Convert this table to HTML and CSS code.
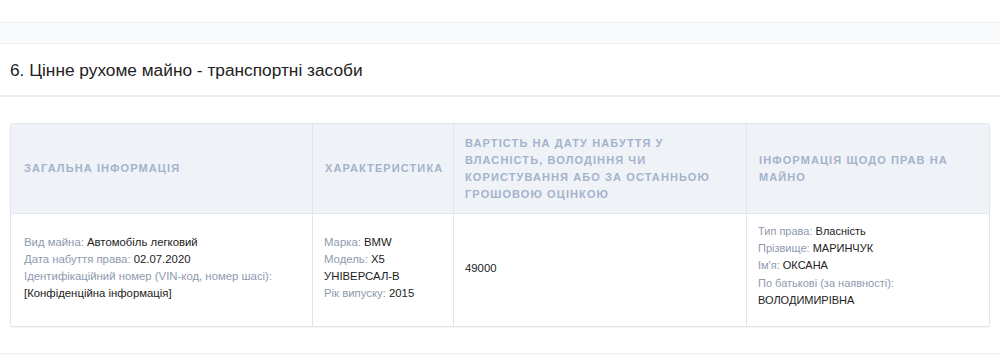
FILE: index.html
```html
<!DOCTYPE html>
<html lang="uk">
<head>
<meta charset="utf-8">
<link rel="stylesheet" href="styles.css">
</head>
<body>
<div class="top-space"></div>
<div class="band"></div>
<div class="section">
  <h2 class="section-title">6. Цінне рухоме майно - транспортні засоби</h2>
</div>
<div class="content">
  <table class="data">
    <colgroup>
      <col class="c1"><col class="c2"><col class="c3"><col class="c4">
    </colgroup>
    <thead>
      <tr>
        <th>Загальна інформація</th>
        <th>Характеристика</th>
        <th>Вартість на дату набуття у власність, володіння чи користування або за останньою грошовою оцінкою</th>
        <th>Інформація щодо прав на майно</th>
      </tr>
    </thead>
    <tbody>
      <tr>
        <td>
          <div><span class="lbl">Вид майна:</span> Автомобіль легковий</div>
          <div><span class="lbl">Дата набуття права:</span> 02.07.2020</div>
          <div><span class="lbl">Ідентифікаційний номер (VIN-код, номер шасі):</span> <span>[Конфіденційна інформація]</span></div>
        </td>
        <td>
          <div><span class="lbl">Марка:</span> BMW</div>
          <div><span class="lbl">Модель:</span> <span>X5</span> <span>УНІВЕРСАЛ-В</span></div>
          <div><span class="lbl">Рік випуску:</span> 2015</div>
        </td>
        <td>49000</td>
        <td class="small">
          <div><span class="lbl">Тип права:</span> Власність</div>
          <div><span class="lbl">Прізвище:</span> МАРИНЧУК</div>
          <div><span class="lbl">Ім'я:</span> ОКСАНА</div>
          <div><span class="lbl">По батькові (за наявності):</span> <span>ВОЛОДИМИРІВНА</span></div>
        </td>
      </tr>
    </tbody>
  </table>
</div>
<div class="bottom-band"></div>
</body>
</html>
```
FILE: styles.css
```css
html, body {
  margin: 0;
  padding: 0;
  background: #fff;
  font-family: "Liberation Sans", Arial, sans-serif;
  color: #222;
}
.top-space {
  height: 22px;
  background: #fff;
}
.band {
  height: 20px;
  background: #f8f9fb;
  border-top: 1px solid #eef0f4;
  border-bottom: 1px solid #eef0f4;
}
.section {
  height: 51px;
  display: flex;
  align-items: center;
  padding: 0 10px;
  border-bottom: 2px solid #eceef2;
}
.section-title {
  margin: 0;
  font-size: 17.3px;
  font-weight: normal;
  color: #222;
  padding-top: 1px;
}
.content {
  padding: 26px 10px 26px 10px;
}
.data {
  width: 100%;
  border-collapse: separate;
  border-spacing: 0;
  border: 1px solid #e1e6ed;
  border-radius: 3px;
  box-shadow: 0 1px 2px rgba(0,0,0,0.06);
  table-layout: fixed;
  overflow: hidden;
}
.c1 { width: 302px; }
.c2 { width: 141px; }
.c3 { width: 293px; }
.c4 { width: auto; }
.data th {
  background: #eff3f8;
  color: #a4b2cb;
  font-size: 11px;
  font-weight: bold;
  text-transform: uppercase;
  letter-spacing: 1.1px;
  text-align: left;
  line-height: 17px;
  height: 90px;
  padding: 0 11px 0 12px;
  box-sizing: border-box;
  border-right: 1px solid #e2e6ec;
  border-bottom: 1px solid #e2e6ec;
  vertical-align: middle;
}
.data th:first-child, .data td:first-child { padding-left: 13px; }
.data th:nth-child(3), .data td:nth-child(3) { padding-left: 11px; }
.data td {
  font-size: 11.35px;
  line-height: 17px;
  color: #222;
  padding: 6px 11px 10px 11px;
  height: 112px;
  box-sizing: border-box;
  border-right: 1px solid #e2e6ec;
  vertical-align: middle;
}
.data th:last-child, .data td:last-child { border-right: none; }
.data td.small { font-size: 11px; line-height: 17.25px; padding-top: 2px; }
.lbl { color: #8e9aae; }
.bottom-band {
  height: 3px;
  border-top: 1px solid #eef0f4;
  background: #f8f9fb;
}
```
